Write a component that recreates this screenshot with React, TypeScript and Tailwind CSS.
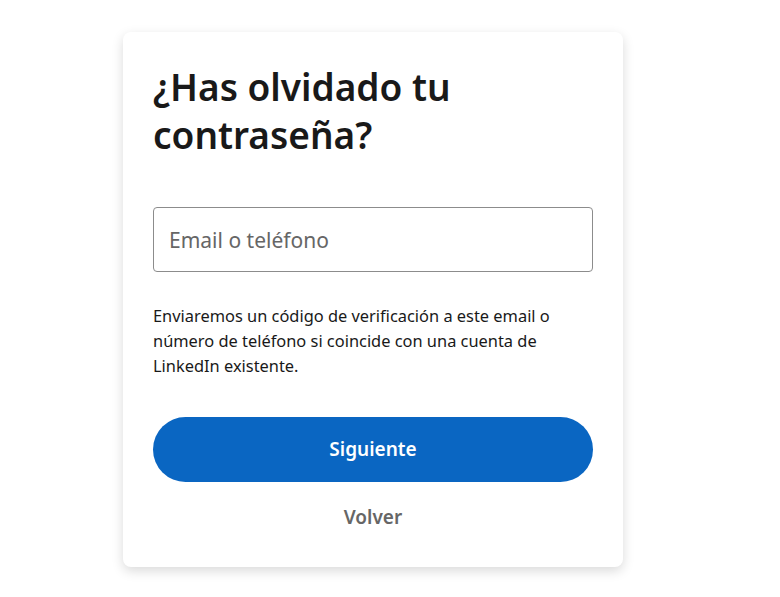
import React from "react";

export default function App() {
  return (
    <div className="min-h-[597px] w-[780px] bg-white" style={{ fontFamily: '"Noto Sans", "Open Sans", sans-serif' }}>
      <div className="pt-[32px] pl-[123px]">
        <div className="w-[500px] rounded-lg bg-white px-[30px] pt-[31px] pb-[35px] shadow-[0_4px_12px_rgba(0,0,0,0.15)]">
          <h1 className="text-[37px] leading-[48px] font-semibold text-[#191919]">
            ¿Has olvidado tu contraseña?
          </h1>
          <div className="mt-[48px]">
            <input
              type="text"
              placeholder="Email o teléfono"
              className="h-[65px] w-full rounded-[4px] border border-[#8c8c8c] px-[15px] text-[21px] text-[#191919] placeholder:text-[#666666] outline-none"
            />
          </div>
          <p className="mt-[31px] text-[16.4px] leading-[25px] text-[#191919]">
            Enviaremos un código de verificación a este email o número de teléfono si coincide con una cuenta de LinkedIn existente.
          </p>
          <button className="mt-[39px] h-[65px] w-full rounded-full bg-[#0a66c2] text-[19px] font-semibold text-white">
            Siguiente
          </button>
          <div className="mt-[21px] flex justify-center">
            <button className="text-[19px] font-semibold text-[#666666]">Volver</button>
          </div>
        </div>
      </div>
    </div>
  );
}
